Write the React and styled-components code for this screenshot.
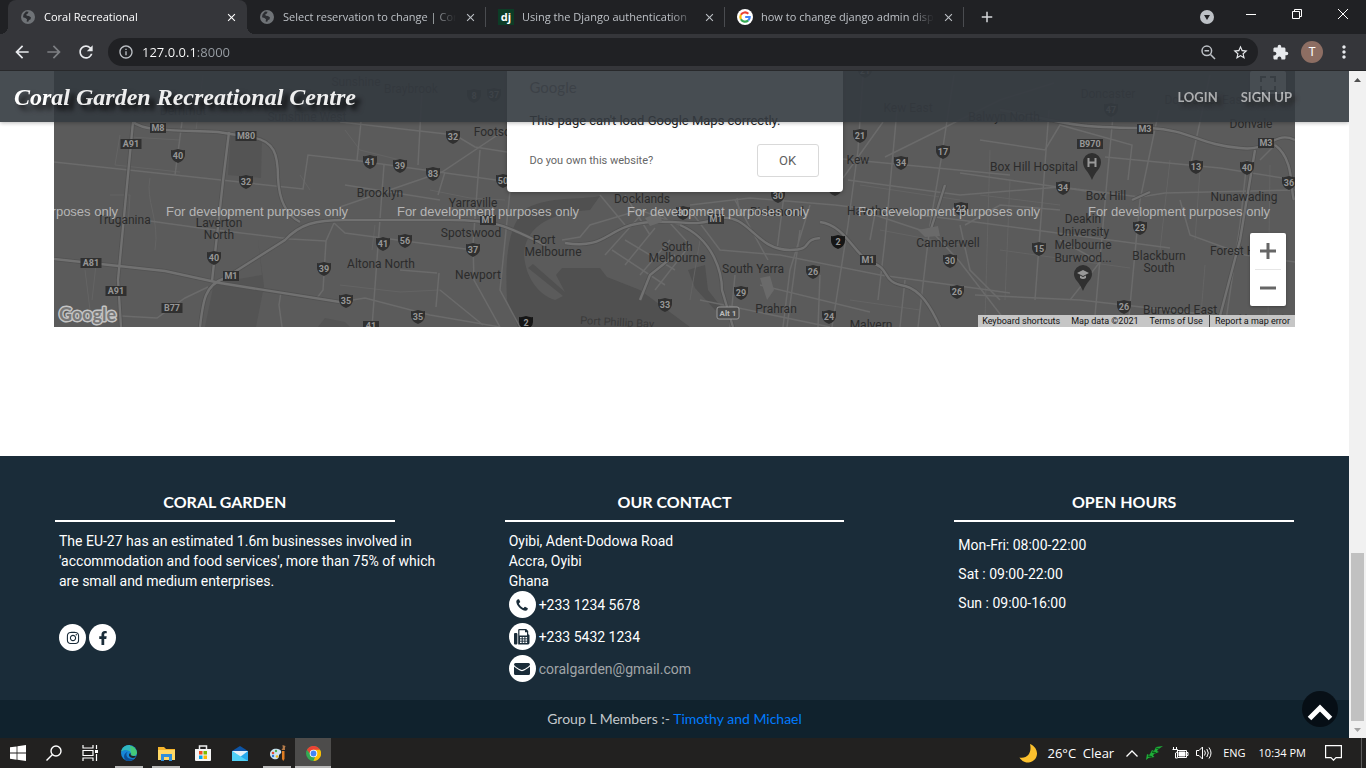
import React from "react";
import styled, { createGlobalStyle } from "styled-components";
import {
  MdArrowBack,
  MdArrowForward,
  MdRefresh,
  MdInfoOutline,
  MdStarBorder,
  MdExtension,
  MdMoreVert,
  MdClose,
  MdAdd,
} from "react-icons/md";
import { FaInstagram, FaFacebookF } from "react-icons/fa";

const ui = `"Open Sans", "Noto Sans", sans-serif`;
const roboto = `Roboto, "Liberation Sans", sans-serif`;
const lato = `Lato, "Liberation Sans", sans-serif`;

const GlobalStyle = createGlobalStyle`
  *, *::before, *::after { box-sizing: border-box; }
  body { margin: 0; overflow: hidden; background: #fff; font-family: ${roboto}; }
  button { font: inherit; border: 0; padding: 0; background: none; color: inherit; cursor: pointer; }
  h2, p, ul { margin: 0; padding: 0; list-style: none; }
  svg { display: block; flex: none; }
`;

const Desktop = styled.div`
  display: flex;
  flex-direction: column;
  height: 100vh;
`;

/* ---------- browser frame ---------- */
const TabStrip = styled.div`
  display: flex;
  flex: none;
  height: 34px;
  padding-left: 8px;
  background: #202124;
  color: #bdc1c6;
  font: 11px/16px ${ui};
`;

const Tab = styled.div`
  position: relative;
  display: flex;
  align-items: center;
  flex: 0 1 239px;
  min-width: 0;
  gap: 8px;
  padding: 0 9px 0 12px;
  border-radius: 8px 8px 0 0;
  color: ${(p) => (p.$active ? "#ffffff" : "#bdc1c6")};
  background: ${(p) => (p.$active ? "#35363a" : "transparent")};

  &::before, &::after {
    content: "";
    display: ${(p) => (p.$active ? "block" : "none")};
    position: absolute;
    bottom: 0;
    width: 8px;
    height: 8px;
  }
  &::before {
    left: -8px;
    background: radial-gradient(circle at 0 0, transparent 8px, #35363a 8px);
  }
  &::after {
    right: -8px;
    background: radial-gradient(circle at 100% 0, transparent 8px, #35363a 8px);
  }
`;

const TabTitle = styled.span`
  flex: 1;
  min-width: 0;
  overflow: hidden;
  white-space: nowrap;
  font-size: 11px;
  mask-image: linear-gradient(90deg, #000 calc(100% - 24px), transparent);
`;

const TabDivider = styled.i`
  position: absolute;
  right: 0;
  top: 7px;
  width: 1px;
  height: 20px;
  background: #4a4c50;
`;

const IconButton = styled.button`
  display: flex;
  align-items: center;
  justify-content: center;
  flex: none;
  width: ${(p) => p.$w || 32}px;
  height: ${(p) => p.$h || 32}px;
  color: ${(p) => p.$color || "#e8eaed"};
`;

const WindowControls = styled.div`
  display: flex;
  margin-left: auto;
`;

const Toolbar = styled.div`
  display: flex;
  align-items: center;
  flex: none;
  height: 37px;
  padding: 0 6px;
  background: #35363a;
  border-bottom: 1px solid #28292b;
`;

const Omnibox = styled.div`
  display: flex;
  align-items: center;
  flex: 1;
  height: 28px;
  margin: 0 6px;
  padding: 0 2px 0 10px;
  gap: 8px;
  border-radius: 14px;
  background: #202124;
  color: #bdc1c6;
`;

const OmniboxActions = styled.div`
  display: flex;
`;

const AddressInput = styled.input`
  flex: 1;
  min-width: 0;
  border: 0;
  padding: 0;
  outline: 0;
  font: 13px/20px ${ui};
  color: transparent;
  background: linear-gradient(90deg, #ffffff 54px, #9aa0a6 54px);
  background-clip: text;
`;

const Avatar = styled.span`
  display: grid;
  place-items: center;
  width: 22px;
  height: 22px;
  border-radius: 50%;
  background: #8d6e63;
  color: #fff;
  font: 12px/22px ${roboto};
`;

/* ---------- viewport and scrollbar ---------- */
const Viewport = styled.div`
  display: flex;
  flex: 1;
  min-height: 0;
`;

const Page = styled.div`
  position: relative;
  display: flex;
  flex-direction: column;
  flex: 1;
  min-width: 0;
  overflow: hidden;
`;

const Scrollbar = styled.div`
  display: flex;
  flex-direction: column;
  flex: none;
  width: 17px;
  padding: 0 2px;
  background: #f1f1f1;
`;

const ScrollSpace = styled.div`
  flex: 465;
`;

const ScrollThumb = styled.div`
  flex: 168;
  background: #c1c1c1;
`;

/* ---------- site ---------- */
const NavBar = styled.nav`
  position: absolute;
  z-index: 2;
  top: 0;
  left: 0;
  right: 0;
  display: flex;
  align-items: center;
  height: 51px;
  padding: 0 57px 0 14px;
  gap: 23px;
  background: #343a40;
  opacity: 0.9;
  box-shadow: 0 1px 4px rgba(0, 0, 0, 0.3);
`;

const Brand = styled.a`
  margin-right: auto;
  color: #fff;
  font: italic bold 24px/32px "Liberation Serif", serif;
  text-decoration: none;
  white-space: nowrap;
  text-shadow: 5px 5px 5px #000;
`;

const NavLink = styled.a`
  color: #b6b8ba;
  font: bold 13px/20px ${lato};
  text-decoration: none;
  text-shadow: 4px 4px 4px #222;
`;

const Main = styled.main`
  flex: 1;
  padding: 0 54px;
  background: #fff;
`;

const MapFrame = styled.section`
  position: relative;
  height: 256px;
  overflow: hidden;
  background: #5b5b5b;
`;

const MapDialog = styled.div`
  position: absolute;
  top: 0;
  left: 50%;
  width: 336px;
  height: 121px;
  padding: 6px 24px 15px 23px;
  transform: translateX(-50%);
  display: flex;
  flex-direction: column;
  background: #fff;
  border-radius: 0 0 4px 4px;
  color: #212121;
  font: 13px/20px ${roboto};
  box-shadow: 0 1px 4px rgba(0, 0, 0, 0.3);
`;

const DialogLogo = styled.span`
  color: #8a8a8a;
  font: 15px/20px ${lato};
`;

const DialogTitle = styled.p`
  margin-top: 14px;
`;

const DialogRow = styled.div`
  display: flex;
  align-items: center;
  justify-content: space-between;
  margin-top: auto;
  color: #666;
  font-size: 11px;
`;

const OkButton = styled.button`
  width: 62px;
  height: 33px;
  border: 1px solid #d9d9d9;
  border-radius: 3px;
  color: #5f5f5f;
  font-size: 13px;
`;

const MapControl = styled.div`
  position: absolute;
  right: 9px;
  width: 36px;
  background: #fff;
  border-radius: 2px;
  box-shadow: 0 1px 3px rgba(0, 0, 0, 0.3);
`;

const Fullscreen = styled(MapControl)`
  top: 0;
  height: 23px;
  padding: 5px 10px;
`;

const Zoom = styled(MapControl)`
  bottom: 21px;
  padding: 0 5px;
`;

const ZoomButton = styled(IconButton)`
  width: 26px;
  height: 36px;
  & + & {
    height: 37px;
    border-top: 1px solid #e6e6e6;
  }
`;

const MapLegal = styled.div`
  position: absolute;
  right: 0;
  bottom: 0;
  display: flex;
  height: 12px;
  padding-left: 4px;
  background: #c6c6c6;
  color: #111;
  font: 9px/12px ${roboto};

  a, button { color: inherit; text-decoration: none; margin-right: 11px; }
  a:nth-of-type(1) { margin-right: 6px; }
  a:nth-of-type(2) { margin-right: 0; padding: 0 5px; border-left: 1px solid #444; }
`;

const Footer = styled.footer`
  display: grid;
  grid-template-columns: repeat(3, 1fr);
  flex: none;
  padding: 36px 0 18px;
  background: #1a2c39;
  color: #fff;
  font: 14px/20px ${roboto};
`;

const Heading = styled.h2`
  margin: 0 55px;
  padding-bottom: 8px;
  border-bottom: 2px solid #fff;
  text-align: center;
  font: bold 16px/20px ${lato};
`;

const ColumnBody = styled.div`
  padding: 9px 8px 0 59px;
`;

const Socials = styled.div`
  display: flex;
  gap: 3px;
  margin-top: 33px;
`;

const Round = styled.span`
  display: grid;
  place-items: center;
  width: 27px;
  height: 27px;
  border-radius: 50%;
  background: #fff;
  color: #1a2c39;
`;

const ContactList = styled.ul`
  display: grid;
  gap: 5px;
`;

const ContactItem = styled.li`
  display: flex;
  align-items: center;
  gap: 3px;
  a { color: #a0a4a7; text-decoration: none; }
`;

const Hours = styled.ul`
  line-height: 29px;
`;

const Credits = styled.div`
  flex: none;
  padding: 9px 0;
  background: #10222d;
  color: #c4c8cb;
  text-align: center;
  font: 14px/20px ${lato};
  a { color: #007bff; text-decoration: none; }
`;

const BackToTop = styled.button`
  position: absolute;
  right: 11px;
  bottom: 11px;
  display: grid;
  place-items: center;
  width: 36px;
  height: 36px;
  padding-top: 6px;
  border-radius: 50%;
  background: rgba(4, 9, 14, 0.78);
`;

/* ---------- taskbar ---------- */
const Taskbar = styled.div`
  display: flex;
  flex: none;
  height: 30px;
  background: #222120;
  color: #fff;
  font: 12px/16px ${ui};
`;

const TaskButton = styled.button`
  display: flex;
  align-items: center;
  justify-content: center;
  width: ${(p) => p.$w || 36}px;
  background: ${(p) => (p.$active ? "#4d4c4b" : "transparent")};
  box-shadow: ${(p) => (p.$active ? "inset 0 -2px 0 #b9b9b9" : "none")};
`;

const AppButton = styled(TaskButton)`
  width: 28px;
  margin: 0 4px 0 5px;
  box-shadow: ${(p) => (p.$open ? "inset 0 -2px 0 #b9b9b9" : "none")};
`;

const AppGroup = styled.div`
  display: flex;
  padding-left: 2px;
`;

const Tray = styled.div`
  display: flex;
  align-items: center;
  margin-left: auto;
  padding-right: 4px;
`;

const TrayItem = styled.span`
  display: flex;
  align-items: center;
  margin-right: ${(p) => p.$gap || 0}px;
  white-space: nowrap;
  font-size: ${(p) => p.$size || 11}px;
`;

const DesktopEdge = styled.i`
  width: 1px;
  height: 30px;
  background: #5c5c5c;
`;

/* ---------- small drawings ---------- */
const Globe = () => (
  <svg width="16" height="16" viewBox="0 0 16 16">
    <circle cx="8" cy="8" r="7" fill="#6f7377" />
    <path d="M3.500 5.500L6 2.600l2.600.2-.8 1.800-1.600.8.600 1.400 2.200.2 2 1.400-.6 2-1.400.6-.8 1.800-1.600-.4.400-2.200L5.400 9 3 8.200z" fill="#2c2e32" />
  </svg>
);

const GoogleG = ({ size = 16 }) => (
  <svg width={size} height={size} viewBox="0 0 16 16">
    <circle cx="8" cy="8" r="8" fill="#fff" />
    <g fill="none" strokeWidth="2.2">
      <path d="M11.3 4.8A4.7 4.7 0 0 0 3.9 5.8" stroke="#ea4335" />
      <path d="M3.9 5.8a4.7 4.7 0 0 0 0 4.4" stroke="#fbbc05" />
      <path d="M3.9 10.2a4.7 4.7 0 0 0 7.3 1.2" stroke="#34a853" />
      <path d="M11.2 11.4a4.6 4.6 0 0 0 1.5-3.4H8.2" stroke="#4285f4" />
    </g>
  </svg>
);

const DjMark = styled.span`
  display: grid;
  place-items: center;
  flex: none;
  width: 16px;
  height: 16px;
  background: #0c3c26;
  color: #fff;
  font: bold 11px/14px ${ui};
`;

const ZoomOutIcon = () => (
  <svg width="15" height="15" viewBox="0 0 15 15" fill="none" stroke="#bdc1c6" strokeWidth="1.500">
    <circle cx="5.800" cy="5.800" r="4.800" />
    <path d="M9.500 9.500L14 14M3.500 5.800h4.600" />
  </svg>
);

const PhoneIcon = () => (
  <svg width="12" height="12" viewBox="0 0 12 12" fill="#1a2c39">
    <path d="M0.300 2.300C.3 1.300 1.300.4 2.300.2c.4-.1.600 0 .8.4l1 2c.3.6-.1.900-.8 1.500-.5.400-.4.700-.1 1.200.9 1.500 2 2.600 3.500 3.500.5.300.8.400 1.200-.1.600-.7.900-1.100 1.500-.8l2 1c.4.200.5.400.4.800-.2 1-1.100 2-2.100 2-4.200.1-9.600-5.200-9.400-9.400z" />
  </svg>
);

const FaxIcon = () => (
  <svg width="16" height="16" viewBox="0 0 16 16" fill="#1a2c39">
    <rect x="0" y="4" width="3.400" height="11.500" rx="1" />
    <path d="M4.200 1a1 1 0 0 1 1-1h7l2 2v3.200a1.400 1.400 0 0 1 1.300 1.400v7.500a1.400 1.400 0 0 1-1.400 1.400H4.200zM5.400 1.200v5.300h7.600V3.200h-2v-2z" fillRule="evenodd" />
    <g fill="#fff">
      {[8, 10.3, 12.6].map((y) => [6, 8.7, 11.4].map((x) => <rect key={x + "-" + y} x={x} y={y} width="1.700" height="1.400" />))}
    </g>
  </svg>
);

const MailIcon = () => (
  <svg width="16" height="12" viewBox="0 0 16 12" fill="#1a2c39">
    <path d="M0 1.500A1.500 1.500 0 0 1 1.500 0h13A1.500 1.500 0 0 1 16 1.500C16 3 9.500 7 8 7S0 3 0 1.500z" />
    <path d="M0 3.600C2 5.200 6.500 8.300 8 8.300S14 5.200 16 3.600v6.900A1.500 1.500 0 0 1 14.500 12h-13A1.500 1.500 0 0 1 0 10.500z" />
  </svg>
);

const Arrow = ({ up }) => (
  <svg width="7" height="4" viewBox="0 0 7 4">
    <path d={up ? "M0 4L3.500 0L7 4z" : "M0 0L3.500 4L7 0z"} fill={up ? "#505050" : "#a3a3a3"} />
  </svg>
);

/* ---------- map drawing ---------- */
const minorRoads = [
  "M54 162L175 175L303 189L308 155L360 161L503 181",
  "M175 175L182 122", "M150 221L200 228L290 239L326 241L334 223", "M326 241L323 290L317 298",
  "M121 316L157 318L185 298L208 287", "M281 292L279 305L282 327", "M340 122L455 135L475 147L507 152",
  "M505 130L442 172L340 207", "M384 165L372 327", "M422 90L418 165", "M480 150L473 245L474 280L500 327",
  "M510 191L500 290L520 327", "M334 223L345 233L405 241L473 250", "M361 122L357 160",
  "M340 302L365 298L430 315L500 327", "M440 200L345 185", "M445 172L438 195", "M437 273L400 270",
  "M439 273L436 307M440 290L483 325",
  "M562 240L580 237L590 225L640 210L680 225M600 195L625 225M625 195L650 235M660 212L690 245",
  "M640 216L605 255M655 228L625 265M670 240L640 275M690 245L655 290M625 240L675 270M612 250L665 285",
  "M690 210L720 250L780 255L880 275L1010 293", "M690 205L750 198L835 205L960 220L1170 248",
  "M735 200L768 260M784 195L777 250M810 205L790 270L783 327M735 275L730 327M800 230L787 327",
  "M843 178L883 122M848 180L960 195L1060 187L1140 197L1165 193L1295 190",
  "M863 75L858 150L848 225L832 327M954 75L941 160L930 225L918 327M897 110L885 240L878 300",
  "M843 159L1010 175M885 157L1000 100L1054 83M860 210L935 235L960 262L1010 327",
  "M960 225L970 270L1000 300M1115 95L1107 180L1094 327M1159 110L1140 200L1128 327M1049 110L1035 300",
  "M960 173L1107 194M1105 157L1220 168L1295 180M1210 75L1190 168M1247 160L1240 225L1225 327",
  "M1260 160L1275 145M1180 200L1190 235L1245 255L1295 262M975 295L1080 300L1220 316L1295 322",
  "M1070 300L1100 262L1060 240M980 140L1045 150L1060 125L1132 145L1128 180M965 225L1000 205L1060 210",
  "M700 300L830 327M760 285L870 312M820 275L818 327M905 280L900 327M740 215L737 198M876 208L870 240",
];

const faintRoads = [
  "M180 140L130 137M120 135L115 165L180 172M110 195L130 195L128 225",
  "M85 270L90 310M96 265L92 300M203 75L196 130M150 178C145 200 160 220 155 250M310 190L300 175",
  "M340 285L400 292L440 290M345 130L360 150L400 160M430 190L470 198L505 200M375 225L372 250",
  "M700 240L690 300M860 185L960 200M880 230L960 245M850 300L920 310M990 150L985 320M1010 180L1005 300",
  "M1170 160L1160 250M1200 170L1195 240M1205 265L1200 327M1270 165L1268 320M980 195L1060 205M1000 250L1130 268",
];

const majorRoads = [
  "M133 122L118 280L121 327", "M133 122C145 132 180 130 218 132L250 137C275 140 278 155 278 178C279 200 286 215 300 222",
  "M229 132L223 181L212 281", "M200 327C203 300 205 285 225 278L285 240C300 224 315 220 345 220L450 220C500 220 510 228 545 245",
  "M54 259L165 271L220 283L340 302", "M565 243C610 250 605 225 650 222C690 220 690 228 720 218C750 214 755 250 790 250C815 250 800 240 820 238",
  "M820 222C845 225 855 255 870 262C892 268 880 282 905 286C920 290 930 305 940 327", "M680 225C715 240 722 275 722 290L733 327",
  "M1000 110C1060 120 1060 128 1150 128C1190 130 1200 145 1240 148C1270 152 1275 130 1295 140", "M1275 145C1295 160 1290 190 1294 200",
  "M945 185L930 232", "M1132 200L1150 192M1220 316L1240 240L1255 150", "M675 255L650 275L640 300",
];

const labels = [
  [124, 224, "Truganina"], [219, 227, "Laverton"], [219, 239, "North"], [380, 197, "Brooklyn"], [473, 207, "Yarraville"],
  [471, 237, "Spotswood"], [478, 279, "Newport"], [381, 268, "Altona North"], [500, 136, "Footscray"], [544, 244, "Port"],
  [553, 256, "Melbourne"], [642, 203, "Docklands"], [677, 251, "South"], [677, 262, "Melbourne"], [753, 273, "South Yarra"],
  [776, 313, "Prahran"], [777, 216, "Richmond"], [873, 215, "Hawthorn"], [858, 164, "Kew"], [948, 247, "Camberwell"],
  [871, 329, "Malvern"], [1034, 171, "Box Hill Hospital"], [1106, 200, "Box Hill"], [1244, 201, "Nunawading"],
  [1083, 223, "Deakin"], [1083, 236, "University"], [1083, 249, "Melbourne"], [1083, 262, "Burwood..."], [1159, 260, "Blackburn"],
  [1159, 272, "South"], [1237, 255, "Forest Hill"], [1180, 314, "Burwood East"], [1251, 128, "Donvale"], [356, 86, "Sunshine"],
  [411, 93, "Braybrook"], [183, 115, "Derrimut"], [307, 121, "Sunshine West"], [908, 112, "Kew East"], [1108, 98, "Doncaster"],
  [1205, 104, "Doncaster East"], [1004, 121, "Balwyn North"],
];

const shields = [
  [178, 156, 40], [246, 182, 32], [214, 258, 40], [324, 269, 39], [346, 301, 35], [453, 137, 32], [370, 162, 41], [400, 166, 39],
  [433, 174, 83], [503, 181, 50], [383, 244, 41], [405, 241, 56], [473, 250, 37], [418, 317, 35], [778, 196, 30], [835, 189, 34],
  [683, 213, 30], [665, 305, 33], [741, 293, 29], [813, 272, 26], [829, 317, 24], [860, 136, 21], [943, 152, 17], [901, 163, 34],
  [961, 209, 22], [950, 261, 30], [957, 292, 26], [1039, 249, 15], [1063, 188, 34], [1140, 228, 23], [1124, 307, 26],
  [1196, 167, 13], [1247, 168, 40], [1289, 183, 36], [865, 71, 21], [1111, 110, 47], [474, 96, 8], [494, 95, 37], [526, 323, 2], [838, 242, 2],
];

const routes = [
  [158, 128, "M8"], [246, 136, "M80"], [131, 144, "A91"], [91, 263, "A81"], [116, 291, "A91"], [231, 276, "M1"], [172, 308, "B77"],
  [488, 220, "M1"], [716, 219, "M1"], [868, 260, "M1"], [1145, 129, "M3"], [1266, 143, "M3"], [1090, 144, "B970"], [371, 326, "41"],
];

const MapDrawing = () => (
  <svg width="100%" height="256" viewBox="54 71 1241 256" preserveAspectRatio="xMidYMid slice" fontFamily="Roboto, sans-serif">
    <rect x="54" y="71" width="1241" height="256" fill="#5b5b5b" />
    <g fill="#545454">
      <path d="M231 132L262 138L261 178L228 175zM214 283L262 275L258 240L264 286L256 327L205 327z" />
      <path d="M318 327L325 318L345 322L350 327zM1260 75L1275 90L1255 105z" />
    </g>
    <path d="M507 300C505 260 507 225 527 208C550 196 580 200 600 196L590 210C545 213 525 230 524 255C526 280 540 295 555 300L563 296L528 268L533 264L565 292L556 275L562 268L600 268L607 277L640 290L690 327L518 327zM688 270L705 265L708 290L725 312L715 310L695 288z" fill="#505050" />
    <g fill="none" stroke="#646464" strokeWidth="1">
      {faintRoads.map((d) => <path key={d} d={d} />)}
    </g>
    <g fill="none" stroke="#6b6b6b" strokeWidth="1.500">
      {minorRoads.map((d) => <path key={d} d={d} />)}
    </g>
    <g fill="none" stroke="#525252" strokeWidth="4">
      {majorRoads.map((d) => <path key={d} d={d} />)}
    </g>
    <g fill="none" stroke="#717171" strokeWidth="2.400">
      {majorRoads.map((d) => <path key={d} d={d} />)}
    </g>
    <g fill="#6a6a6a">
      <path d="M918 230L938 226L940 236L925 237zM760 278L770 276L774 290L767 300zM645 218L660 212L662 222L650 226z" />
    </g>
    <g fill="#2b2b2b" fontSize="12" textAnchor="middle">
      {labels.map(([x, y, t]) => <text key={t + x + y} x={x} y={y}>{t}</text>)}
      <text x="580" y="324" fontSize="11" textAnchor="start" fill="#3a3a3a" transform="rotate(3 580 324)">Port Phillip Bay</text>
      <text x="1262" y="323" fill="#444">Vermont</text>
    </g>
    <g fontSize="9" fontWeight="bold" textAnchor="middle" fill="#979797">
      {shields.map(([x, y, n]) => (
        <g key={x}>
          <path d={`M${x - 7} ${y - 6}q3 .5 7-1q4 1.500 7 1l0 5q0 5-7 8q-7-3-7-8z`} fill={n === 2 ? "#161616" : "#303030"} />
          <text x={x} y={y + 3}>{n}</text>
        </g>
      ))}
      {routes.map(([x, y, t]) => {
        const w = t.length * 5 + 6;
        return (
          <g key={x}>
            <rect x={x - w / 2} y={y - 5} width={w} height="10" fill="#303030" />
            <text x={x} y={y + 3}>{t}</text>
          </g>
        );
      })}
      <rect x="717" y="307" width="22" height="12" rx="2" fill="#4c4c4c" stroke="#999" />
      <text x="728" y="316" fontSize="8" fill="#bbb">Alt 1</text>
    </g>
    <g fill="#303030">
      <path d="M1092 180C1088 170 1083 169 1083 162A9 9 0 0 1 1101 162C1101 169 1096 170 1092 180z" />
      <path d="M1083 291C1079 281 1074 280 1074 274A9 9 0 0 1 1092 274C1092 280 1087 281 1083 291z" />
    </g>
    <path d="M1088.500 158v9M1095.500 158v9M1088.500 162.500h7" stroke="#999" strokeWidth="2" />
    <path d="M1077 273l6-3 6 3-6 3zM1080 275.500v2.500q3 2 6 0v-2.500l-3 1.500z" fill="#999" />
    <g fill="#b5b5b5" fontFamily="Liberation Sans, sans-serif" fontSize="13" textAnchor="middle">
      {[27, 257, 488, 718, 949, 1179].map((x) => <text key={x} x={x} y="216">For development purposes only</text>)}
    </g>
    <text x="59" y="321" fontFamily="Lato, sans-serif" fontSize="18" fontWeight="bold" fill="#777" stroke="#c4c4c4" strokeWidth="3" paintOrder="stroke" strokeLinejoin="round">Google</text>
  </svg>
);

const tabs = [
  { title: "Coral Recreational", icon: <Globe />, active: true },
  { title: "Select reservation to change | Coral", icon: <Globe /> },
  { title: "Using the Django authentication", icon: <DjMark>dj</DjMark> },
  { title: "how to change django admin display", icon: <GoogleG /> },
];

function Browser() {
  return (
    <>
      <TabStrip>
        {tabs.map((t, i) => (
          <Tab key={t.title} $active={t.active}>
            {t.icon}
            <TabTitle>{t.title}</TabTitle>
            <IconButton $w={13} $h={16} $color={t.active ? "#fff" : "#bdc1c6"} aria-label={"Close " + t.title}>
              <MdClose size={13} />
            </IconButton>
            {i > 0 && <TabDivider />}
          </Tab>
        ))}
        <IconButton $w={46} $h={34} $color="#d5d7da" aria-label="New tab"><MdAdd size={18} /></IconButton>
        <WindowControls>
          <IconButton $w={43} $h={34} aria-label="Search tabs">
            <svg width="14" height="14" viewBox="0 0 14 14"><circle cx="7" cy="7" r="7" fill="#bdc1c6" /><path d="M4 5h6L7 10z" fill="#202124" /></svg>
          </IconButton>
          <IconButton $w={46} $h={28} aria-label="Minimize">
            <svg width="10" height="10"><path d="M0 5.500h10" stroke="#fff" /></svg>
          </IconButton>
          <IconButton $w={46} $h={28} aria-label="Restore">
            <svg width="10" height="10" fill="none" stroke="#fff"><path d="M.5 2.500h7v7h-7zM2.500 2.500v-2h7v7h-2" /></svg>
          </IconButton>
          <IconButton $w={46} $h={28} aria-label="Close window">
            <svg width="10" height="10" stroke="#fff"><path d="M0 0L10 10M10 0L0 10" /></svg>
          </IconButton>
        </WindowControls>
      </TabStrip>
      <Toolbar>
        <IconButton aria-label="Back"><MdArrowBack size={20} /></IconButton>
        <IconButton $color="#7d7f83" aria-label="Forward"><MdArrowForward size={20} /></IconButton>
        <IconButton aria-label="Reload"><MdRefresh size={20} /></IconButton>
        <Omnibox>
          <MdInfoOutline size={16} />
          <AddressInput aria-label="Address" defaultValue="127.0.0.1:8000" />
          <OmniboxActions>
            <IconButton aria-label="Zoom"><ZoomOutIcon /></IconButton>
            <IconButton aria-label="Bookmark"><MdStarBorder size={17} /></IconButton>
          </OmniboxActions>
        </Omnibox>
        <IconButton aria-label="Extensions"><MdExtension size={17} /></IconButton>
        <IconButton aria-label="Profile"><Avatar>T</Avatar></IconButton>
        <IconButton aria-label="Menu"><MdMoreVert size={20} /></IconButton>
      </Toolbar>
    </>
  );
}

function Site() {
  return (
    <Viewport>
      <Page>
        <NavBar>
          <Brand href="#">Coral Garden Recreational Centre</Brand>
          <NavLink href="#login">LOGIN</NavLink>
          <NavLink href="#signup">SIGN UP</NavLink>
        </NavBar>
        <Main>
          <MapFrame>
            <MapDrawing />
            <MapDialog>
              <DialogLogo>Google</DialogLogo>
              <DialogTitle>This page can't load Google Maps correctly.</DialogTitle>
              <DialogRow>
                <span>Do you own this website?</span>
                <OkButton>OK</OkButton>
              </DialogRow>
            </MapDialog>
            <Fullscreen>
              <svg width="16" height="16" fill="none" stroke="#666" strokeWidth="2"><path d="M1 6V1h5M10 1h5v5M15 10v5h-5M6 15H1v-5" /></svg>
            </Fullscreen>
            <Zoom>
              <ZoomButton aria-label="Zoom in"><svg width="16" height="16" stroke="#666" strokeWidth="3"><path d="M0 8h16M8 0v16" /></svg></ZoomButton>
              <ZoomButton aria-label="Zoom out"><svg width="16" height="16" stroke="#666" strokeWidth="3"><path d="M0 8h16" /></svg></ZoomButton>
            </Zoom>
            <MapLegal>
              <button>Keyboard shortcuts</button>
              <button>Map data ©2021</button>
              <a href="#terms">Terms of Use</a>
              <a href="#report">Report a map error</a>
            </MapLegal>
          </MapFrame>
        </Main>
        <Footer>
          <section>
            <Heading>CORAL GARDEN</Heading>
            <ColumnBody>
              <p>The EU-27 has an estimated 1.6m businesses involved in 'accommodation and food services', more than 75% of which are small and medium enterprises.</p>
              <Socials>
                <Round as="a" href="#instagram" aria-label="Instagram"><FaInstagram size={14} /></Round>
                <Round as="a" href="#facebook" aria-label="Facebook"><FaFacebookF size={14} /></Round>
              </Socials>
            </ColumnBody>
          </section>
          <section>
            <Heading>OUR CONTACT</Heading>
            <ColumnBody>
              <p>Oyibi, Adent-Dodowa Road<br />Accra, Oyibi<br />Ghana</p>
              <ContactList>
                <ContactItem><Round><PhoneIcon /></Round>+233 1234 5678</ContactItem>
                <ContactItem><Round><FaxIcon /></Round>+233 5432 1234</ContactItem>
                <ContactItem><Round><MailIcon /></Round><a href="#mail">coralgarden@gmail.com</a></ContactItem>
              </ContactList>
            </ColumnBody>
          </section>
          <section>
            <Heading>OPEN HOURS</Heading>
            <ColumnBody>
              <Hours>
                <li>Mon-Fri: 08:00-22:00</li>
                <li>Sat : 09:00-22:00</li>
                <li>Sun : 09:00-16:00</li>
              </Hours>
            </ColumnBody>
          </section>
        </Footer>
        <Credits>Group L Members :- <a href="#team">Timothy and Michael</a></Credits>
        <BackToTop aria-label="Back to top">
          <svg width="26" height="17" viewBox="0 0 26 17" fill="none" stroke="#fff" strokeWidth="5"><path d="M2.500 14.500L13 4L23.500 14.500" /></svg>
        </BackToTop>
      </Page>
      <Scrollbar>
        <IconButton $w={13} $h={17} aria-label="Scroll up"><Arrow up /></IconButton>
        <ScrollSpace />
        <ScrollThumb />
        <IconButton $w={13} $h={17} aria-label="Scroll down"><Arrow /></IconButton>
      </Scrollbar>
    </Viewport>
  );
}

function WindowsBar() {
  return (
    <Taskbar>
      <TaskButton aria-label="Start">
        <svg width="16" height="16" fill="#fff"><path d="M0 2.300L6.600 1.400V7.600H0zM7.400 1.300L16 0V7.600H7.400zM0 8.400H6.600V14.700L0 13.800zM7.400 8.400H16V16L7.400 14.800z" /></svg>
      </TaskButton>
      <TaskButton aria-label="Search">
        <svg width="16" height="16" fill="none" stroke="#fff" strokeWidth="1.400"><circle cx="10" cy="6" r="5" /><path d="M6.500 9.500L.5 15.500" /></svg>
      </TaskButton>
      <TaskButton aria-label="Task view">
        <svg width="17" height="16" fill="none" stroke="#fff" strokeWidth="1.200"><path d="M1 0v3h10V0M1 5.500h10v5H1zM1 16v-3h10v3M14.500 0v4M14.500 9v7" /><path d="M13 5h3v3h-3z" fill="#fff" stroke="none" /></svg>
      </TaskButton>
      <AppGroup>
        <AppButton $open aria-label="Edge">
          <svg width="16" height="16" viewBox="0 0 16 16">
            <circle cx="8" cy="8" r="8" fill="#1787d8" />
            <path d="M.3 6.500A8 8 0 0 1 16 7.500C16 10 14 11 11.500 10.800C9.500 10.500 10.500 9.500 10 7.700C9 5 3.500 4 .3 6.500z" fill="#45c978" />
            <path d="M.3 6.500A8 8 0 0 1 9 .1L10 7C7.500 4.500 3 4 .3 6.500z" fill="#30b8c2" />
            <path d="M5.500 9C5 12 8 14.500 13.500 13.500A8 8 0 0 1 5 15.400C1.500 12 3 8 7.500 6.600C6 7.500 5.600 8 5.500 9z" fill="#0b4d96" />
            <path d="M10 8.500C9 10 10 11.500 15 11L13.500 12.800C9 13.500 7 11 8.500 8.500z" fill="#222" />
          </svg>
        </AppButton>
        <AppButton $open aria-label="File Explorer">
          <svg width="17" height="15"><path d="M0 1h6l2 2h9v11H0z" fill="#f7b52c" /><path d="M0 4h17v10H0z" fill="#ffd966" /><path d="M3 8h11v7h-3v-4H6v4H3z" fill="#2f8fdb" /></svg>
        </AppButton>
        <AppButton aria-label="Store">
          <svg width="16" height="16"><path d="M4.500 4V1h7v3" fill="none" stroke="#eee" strokeWidth="1.500" /><path d="M0 4h16v11q0 1-1 1H1q-1 0-1-1z" fill="#f4f4f4" /><path d="M4 6h3.500v3.500H4z" fill="#f25022" /><path d="M8.500 6H12v3.500H8.500z" fill="#7fba00" /><path d="M4 10.500h3.500V14H4z" fill="#00a4ef" /><path d="M8.500 10.500H12V14H8.500z" fill="#ffb900" /></svg>
        </AppButton>
        <AppButton aria-label="Mail">
          <svg width="16" height="15"><path d="M0 5L8 0l8 5z" fill="#0d54a5" /><path d="M0 5h16v10H0z" fill="#28a8ea" /><path d="M0 5h16L8 11z" fill="#e5eff6" /><path d="M0 15V5l16 10z" fill="#50d1f6" /></svg>
        </AppButton>
        <AppButton $open aria-label="Paint">
          <svg width="17" height="16"><path d="M1 9C1 5 5 3 9 4s4 4 2 5 0 4-3 5-7-1-7-5z" fill="#c9e3f2" /><circle cx="4" cy="8" r="1.300" fill="#e64a2e" /><circle cx="7" cy="6" r="1.200" fill="#4bae4f" /><circle cx="4" cy="11" r="1.200" fill="#2e76d0" /><circle cx="8" cy="11.500" r="1.300" fill="#f3b71c" /><path d="M13 6h2.500v8l-1.300 2L13 14z" fill="#df7d22" /><path d="M12.500 5q2-2 1-5l3 1q-1 2-.500 4z" fill="#b57b4a" /></svg>
        </AppButton>
        <TaskButton $active aria-label="Chrome">
          <svg width="15" height="15" viewBox="0 0 16 16"><circle cx="8" cy="8" r="8" fill="#34a853" /><path d="M1 4A8 8 0 0 1 15 4L8 8z" fill="#ea4335" /><path d="M15 4A8 8 0 0 1 8 16L11 8L8 4z" fill="#fbbc05" /><path d="M1 4L8 4V8L5 9z" fill="#ea4335" /><circle cx="8" cy="8" r="4" fill="#fff" /><circle cx="8" cy="8" r="3.100" fill="#4285f4" /></svg>
        </TaskButton>
      </AppGroup>
      <Tray>
        <TrayItem $gap={9}>
          <svg width="19" height="19"><path d="M11 0C21 4 20 17 10 18.500C5 19 2 16 .5 13.500C9 15 13 8 11 0z" fill="#fbc02d" /></svg>
        </TrayItem>
        <TrayItem $gap={12} $size={13}>26°C&nbsp;&nbsp;Clear</TrayItem>
        <TrayItem $gap={8}><svg width="12" height="7" fill="none" stroke="#fff" strokeWidth="1.300"><path d="M.5 6.500L6 1L11.500 6.500" /></svg></TrayItem>
        <TrayItem $gap={9}>
          <svg width="17" height="16">
            <path d="M0 15l1-6 2 1 1-1 2-4 2 1 2-4 7-1-5 3.500-1 1.500 2 1-5 2-1 1.500 1.500 1.500-6 1z" fill="#1fae38" />
            <path d="M2 11l4 1M6 7l4 1M10 3l3 1" stroke="#0a5c1a" strokeWidth="1.300" />
          </svg>
        </TrayItem>
        <TrayItem $gap={7}><svg width="17" height="12" fill="none" stroke="#fff"><path d="M5.500 3.500h9v7h-9zM14.500 5.500h1.500v3h-1.500M1.500 0v2M4.500 0v2M.5 2.500h5v2l-2 1.500v5h2" /><path d="M7 5h6v4H7z" fill="#fff" /></svg></TrayItem>
        <TrayItem $gap={11}><svg width="16" height="14" fill="none" stroke="#fff"><path d="M.5 4.500h2.500l3.500-3.500v12L3 9.500H.5zM8.500 4.500q1.800 2.500 0 5M10.800 3q3 4 0 8M13 1.500q4 5.500 0 11" /></svg></TrayItem>
        <TrayItem $gap={13}>ENG</TrayItem>
        <TrayItem $gap={19}>10:34 PM</TrayItem>
        <TrayItem $gap={19}><svg width="17" height="16" fill="none" stroke="#fff" strokeWidth="1.200"><path d="M.6.6h15.800v12H11l-2.500 2.600L6 12.600H.6z" /></svg></TrayItem>
        <DesktopEdge />
      </Tray>
    </Taskbar>
  );
}

export default function App() {
  return (
    <>
      <GlobalStyle />
      <Desktop>
        <Browser />
        <Site />
        <WindowsBar />
      </Desktop>
    </>
  );
}
